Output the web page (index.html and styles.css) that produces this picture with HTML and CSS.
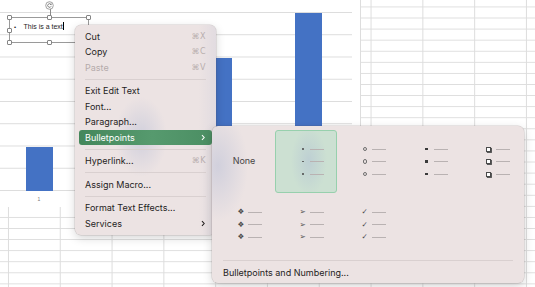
FILE: index.html
```html
<!DOCTYPE html>
<html lang="en">
<head>
    <meta charset="UTF-8">
    <meta name="viewport" content="width=device-width, initial-scale=1.0">
    <title>Bulletpoints menu</title>
    <link rel="stylesheet" href="styles.css">
</head>
<body>

    <div class="sheet">

        <div class="chart">
            <div class="plot">
                <div class="bar" style="height:44px"></div>
                <div class="bar" style="height:96px"></div>
                <div class="bar" style="height:133px"></div>
                <div class="bar" style="height:178px"></div>
            </div>
            <div class="labels">
                <span>1</span><span>2</span><span>3</span><span>4</span>
            </div>
        </div>

        <div class="textbox">
            <span class="rotate-line"></span>
            <svg class="rotate" viewBox="0 0 9 9" width="9" height="9">
                <circle cx="4.5" cy="4.5" r="3.8" fill="#fff" stroke="#8a8a8a" stroke-width="0.8"/>
                <path d="M6.1 3.6a1.8 1.8 0 1 0 0.1 1.6" fill="none" stroke="#555" stroke-width="0.7"/>
                <path d="M5.2 3.4l1.1 0.3 0.2-1.1" fill="none" stroke="#555" stroke-width="0.6"/>
            </svg>
            <span class="handle h-tl"></span>
            <span class="handle h-tm"></span>
            <span class="handle h-tr"></span>
            <span class="handle h-ml"></span>
            <span class="handle h-mr"></span>
            <span class="handle h-bl"></span>
            <span class="handle h-bm"></span>
            <span class="handle h-br"></span>
            <p class="tb-text"><span class="tb-bullet">•</span>This is a text<span class="caret"></span></p>
        </div>

        <div class="menu">
            <div class="item"><span>Cut</span><span class="key">⌘X</span></div>
            <div class="item"><span>Copy</span><span class="key">⌘C</span></div>
            <div class="item disabled"><span>Paste</span><span class="key">⌘V</span></div>
            <div class="sep"></div>
            <div class="item"><span>Exit Edit Text</span></div>
            <div class="item"><span>Font...</span></div>
            <div class="item"><span>Paragraph...</span></div>
            <div class="item active">
                <span>Bulletpoints</span>
                <svg class="chev" viewBox="0 0 5 8" width="5" height="8"><path d="M1.2 1l2.8 3-2.8 3" fill="none" stroke="currentColor" stroke-width="1.3"/></svg>
            </div>
            <div class="sep"></div>
            <div class="item"><span>Hyperlink...</span><span class="key">⌘K</span></div>
            <div class="sep"></div>
            <div class="item"><span>Assign Macro...</span></div>
            <div class="sep"></div>
            <div class="item"><span>Format Text Effects...</span></div>
            <div class="item">
                <span>Services</span>
                <svg class="chev" viewBox="0 0 5 8" width="5" height="8"><path d="M1.2 1l2.8 3-2.8 3" fill="none" stroke="currentColor" stroke-width="1.3"/></svg>
            </div>
        </div>

        <div class="submenu">
            <div class="styles">
                <div class="cell none">None</div>
                <div class="cell selected">
                    <div class="row"><span class="mark"><i class="dot"></i></span></div>
                    <div class="row"><span class="mark"><i class="dot"></i></span></div>
                    <div class="row"><span class="mark"><i class="dot"></i></span></div>
                </div>
                <div class="cell">
                    <div class="row"><span class="mark"><i class="ring"></i></span></div>
                    <div class="row"><span class="mark"><i class="ring"></i></span></div>
                    <div class="row"><span class="mark"><i class="ring"></i></span></div>
                </div>
                <div class="cell">
                    <div class="row"><span class="mark"><i class="square"></i></span></div>
                    <div class="row"><span class="mark"><i class="square"></i></span></div>
                    <div class="row"><span class="mark"><i class="square"></i></span></div>
                </div>
                <div class="cell">
                    <div class="row"><span class="mark"><i class="box"></i></span></div>
                    <div class="row"><span class="mark"><i class="box"></i></span></div>
                    <div class="row"><span class="mark"><i class="box"></i></span></div>
                </div>
                <div class="cell">
                    <div class="row"><span class="mark glyph">❖</span></div>
                    <div class="row"><span class="mark glyph">❖</span></div>
                    <div class="row"><span class="mark glyph">❖</span></div>
                </div>
                <div class="cell">
                    <div class="row"><span class="mark glyph">➢</span></div>
                    <div class="row"><span class="mark glyph">➢</span></div>
                    <div class="row"><span class="mark glyph">➢</span></div>
                </div>
                <div class="cell">
                    <div class="row"><span class="mark glyph">✓</span></div>
                    <div class="row"><span class="mark glyph">✓</span></div>
                    <div class="row"><span class="mark glyph">✓</span></div>
                </div>
            </div>
            <div class="sep"></div>
            <div class="item wide"><span>Bulletpoints and Numbering...</span></div>
        </div>

    </div>

</body>
</html>
```

FILE: styles.css
```css
* {
    margin: 0;
    padding: 0;
    box-sizing: border-box;
}

body {
    width: 535px;
    height: 287px;
    overflow: hidden;
    background: #fff;
    font-family: Inter, 'Liberation Sans', Arial, sans-serif;
}

/* spreadsheet grid */
.sheet {
    position: relative;
    width: 535px;
    height: 287px;
    overflow: hidden;
    background-color: #fff;
    background-image:
        linear-gradient(90deg, transparent 8px, #dddddd 8px, #dddddd 9px, transparent 9px),
        linear-gradient(180deg, transparent 6.5px, #dddddd 6.5px, #dddddd 7.5px, transparent 7.5px);
    background-size: 51.8px 100%, 100% 11.08px;
}

/* chart object */
.chart {
    position: absolute;
    left: 0;
    top: 0;
    width: 361px;
    height: 207px;
    padding-top: 12px;
    background: #fff;
    border-right: 1px solid #dddddd;
}

.plot {
    display: flex;
    align-items: flex-end;
    gap: 62.75px;
    width: 352px;
    height: 179px;
    padding-left: 25.5px;
    background-image: linear-gradient(180deg, #dcdcdc 0, #dcdcdc 1px, transparent 1px);
    background-size: 100% 22.25px;
}

.bar {
    width: 27px;
    background: #4472c4;
}

.labels {
    display: flex;
    gap: 62.75px;
    padding-left: 25.5px;
    margin-top: 5px;
}

.labels span {
    width: 27px;
    text-align: center;
    font-family: 'Liberation Sans', Arial, sans-serif;
    font-size: 5px;
    color: #777;
}

/* text box with selection handles */
.textbox {
    position: absolute;
    left: 9px;
    top: 17px;
    width: 80px;
    height: 26px;
    border: 1px solid #9a9a9a;
}

.handle {
    position: absolute;
    width: 5px;
    height: 5px;
    background: #fff;
    border: 0.8px solid #858585;
    border-radius: 1px;
}

.h-tl { left: -3px; top: -3px; }
.h-tm { left: 37px; top: -3px; }
.h-tr { left: 76px; top: -3px; }
.h-ml { left: -3px; top: 10px; }
.h-mr { left: 76px; top: 10px; }
.h-bl { left: -3px; top: 22px; }
.h-bm { left: 37px; top: 22px; }
.h-br { left: 76px; top: 22px; }

.rotate {
    position: absolute;
    left: 35px;
    top: -17px;
}

.rotate-line {
    position: absolute;
    left: 39.5px;
    top: -9px;
    width: 0.8px;
    height: 7px;
    background: #8a8a8a;
}

.tb-text {
    position: absolute;
    left: 4px;
    top: 4px;
    font-family: 'Liberation Sans', Arial, sans-serif;
    font-size: 7px;
    line-height: 8px;
    color: #1e1e1e;
    white-space: nowrap;
}

.tb-bullet {
    display: inline-block;
    width: 9.5px;
    font-size: 6px;
}

.caret {
    display: inline-block;
    width: 1px;
    height: 8px;
    margin-left: 0.5px;
    background: #000;
    vertical-align: -1.5px;
}

/* context menu */
.menu,
.submenu {
    position: absolute;
    border-radius: 6px;
    background-color: #ece3e3;
    box-shadow: 0 0 0 0.5px rgba(90, 70, 70, 0.22), 0 3px 10px rgba(0, 0, 0, 0.17);
}

.menu {
    left: 75px;
    top: 24.5px;
    width: 141px;
    padding: 4px 0 3.5px;
    background-image:
        radial-gradient(26px 40px at 66px 112px, rgba(175, 184, 212, 0.45), rgba(175, 184, 212, 0)),
        linear-gradient(90deg, rgba(236, 227, 227, 0) 88%, rgba(215, 212, 222, 0.5));
}

.item {
    display: flex;
    align-items: center;
    justify-content: space-between;
    height: 15.5px;
    margin: 0 4px;
    padding: 0 6px;
    border-radius: 3px;
    font-size: 9px;
    font-weight: 400;
    color: #1f1d1d;
    white-space: nowrap;
}

.item.disabled {
    color: #b5abab;
}

.item.active {
    color: #fff;
    background: linear-gradient(90deg, #44875b, #569a6e 55%, #4b8e63);
}

.key {
    font-family: 'DejaVu Sans', sans-serif;
    font-size: 8px;
    font-weight: normal;
    color: #b8aeae;
    letter-spacing: 0.5px;
}

.chev {
    width: 4px;
    height: 7px;
    margin-right: 1px;
}

.sep {
    height: 1px;
    margin: 3.5px 10px;
    background: #d9d0d0;
}

/* bulletpoints submenu */
.submenu {
    left: 212px;
    top: 125.5px;
    width: 311.5px;
    padding: 4.5px 1px 3px;
    background-image:
        radial-gradient(30px 55px at 6px 40px, rgba(176, 185, 212, 0.45), rgba(176, 185, 212, 0));
}

.styles {
    display: grid;
    grid-template-columns: repeat(5, 62px);
    grid-auto-rows: 63px;
}

.cell {
    display: flex;
    flex-direction: column;
    justify-content: center;
    padding-left: 22px;
    border: 1px solid transparent;
    border-radius: 3px;
}

.cell.none {
    align-items: center;
    padding: 0 0 2px;
    font-size: 9px;
    color: #474444;
}

.cell.selected {
    border-color: #97d0ad;
    background-color: #cce0d2;
    background-image: radial-gradient(18px 34px at 33px 30px, rgba(180, 196, 212, 0.6), rgba(180, 196, 212, 0));
}

.row {
    display: flex;
    align-items: center;
    height: 12.5px;
}

.row::after {
    content: "";
    width: 14px;
    height: 1px;
    margin-left: 2px;
    background: #b9b2b2;
}

.mark {
    display: flex;
    align-items: center;
    justify-content: center;
    width: 9.5px;
    height: 8px;
}

.dot {
    width: 1.6px;
    height: 1.6px;
    border-radius: 50%;
    background: #555;
}

.ring {
    width: 4.2px;
    height: 4.2px;
    border-radius: 50%;
    border: 0.8px solid #6e6e6e;
}

.square {
    width: 2.6px;
    height: 2.6px;
    background: #3a3a3a;
}

.box {
    width: 5px;
    height: 5px;
    border: 0.9px solid #4a4a4a;
    box-shadow: 0.9px 0.9px 0 #4a4a4a;
    background: #fff;
}

.glyph {
    font-family: 'DejaVu Sans', sans-serif;
    font-size: 7.5px;
    line-height: 8px;
    color: #4a4a4a;
}

.item.wide {
    height: 16px;
    margin: 0;
    padding: 0 10px;
}
```
